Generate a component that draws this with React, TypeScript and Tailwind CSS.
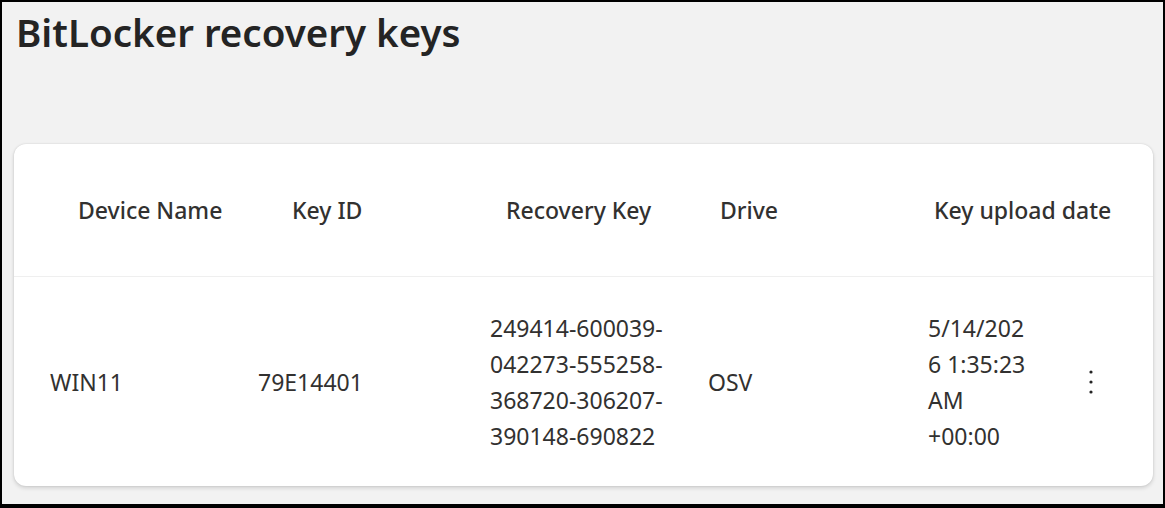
import React from "react";

interface KeyRow {
  deviceName: string;
  keyId: string;
  recoveryKey: string[];
  drive: string;
  uploadDate: string[];
}

const rows: KeyRow[] = [
  {
    deviceName: "WIN11",
    keyId: "79E14401",
    recoveryKey: ["249414-600039-", "042273-555258-", "368720-306207-", "390148-690822"],
    drive: "OSV",
    uploadDate: ["5/14/202", "6 1:35:23", "AM", "+00:00"],
  },
];

const cols = "grid grid-cols-[228px_232px_218px_220px_148px_1fr]";

const MoreIcon = () => (
  <svg width="6" height="26" viewBox="0 0 6 26" fill="#242424" aria-hidden="true">
    <circle cx="3" cy="3" r="1.6" />
    <circle cx="3" cy="13" r="1.6" />
    <circle cx="3" cy="23" r="1.6" />
  </svg>
);

export default function App() {
  return (
    <div className="w-[1165px] h-[508px] border-2 border-b-4 border-black bg-[#f2f2f2] font-['Noto_Sans',sans-serif] text-[#323130] overflow-hidden">
      <h1 className="pl-[14px] pt-[3px] text-[38.5px] leading-[54px] font-semibold text-[#242424]">
        BitLocker recovery keys
      </h1>

      <div className="mt-[85px] ml-[12px] w-[1139px] bg-white rounded-[12px] shadow-[0_2px_4px_rgba(0,0,0,0.14),0_0_2px_rgba(0,0,0,0.12)]">
        {/* header */}
        <div className={`${cols} h-[133px] items-center border-b border-[#efefef] text-[23px] font-medium whitespace-nowrap`}>
          <div className="pl-[64px]">Device Name</div>
          <div className="pl-[50px]">Key ID</div>
          <div className="pl-[32px]">Recovery Key</div>
          <div className="pl-[28px]">Drive</div>
          <div className="pl-[22px]">Key upload date</div>
          <div />
        </div>

        {rows.map((r) => (
          <div key={r.keyId} className={`${cols} h-[209px] items-center text-[23px] leading-[36px]`}>
            <div className="pl-[36px]">{r.deviceName}</div>
            <div className="pl-[16px]">{r.keyId}</div>
            <div className="pl-[16px]">
              {r.recoveryKey.map((l) => (
                <div key={l}>{l}</div>
              ))}
            </div>
            <div className="pl-[16px]">{r.drive}</div>
            <div className="pl-[16px] whitespace-nowrap">
              {r.uploadDate.map((l) => (
                <div key={l}>{l}</div>
              ))}
            </div>
            <div className="pl-[28px] flex items-center">
              <MoreIcon />
            </div>
          </div>
        ))}
      </div>
    </div>
  );
}
